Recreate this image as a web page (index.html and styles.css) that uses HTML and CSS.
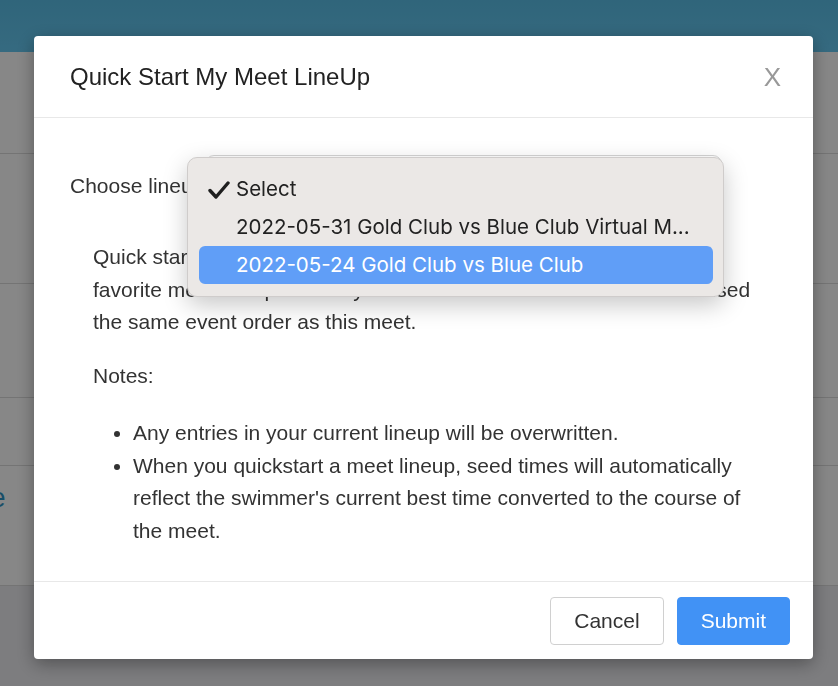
FILE: index.html
```html
<!DOCTYPE html>
<html lang="en">

<head>
    <meta charset="UTF-8" />
    <meta name="viewport" content="width=device-width, initial-scale=1" />
    <title>Quick Start My Meet LineUp</title>
    <link rel="stylesheet" href="styles.css">
</head>

<body>

    <div class="page">
        <div class="topbar"></div>
        <div class="rows">
            <div class="row row-1"></div>
            <div class="row row-2"></div>
            <div class="row row-3"></div>
            <div class="row row-4"></div>
            <div class="row row-5"><a class="row-link">Change</a></div>
        </div>
        <div class="page-foot"></div>
    </div>

    <div class="backdrop">
        <div class="modal">
            <div class="modal-header">
                <h4 class="modal-title">Quick Start My Meet LineUp</h4>
                <button class="close">X</button>
            </div>

            <div class="modal-body">
                <div class="form-row">
                    <label class="form-label">Choose lineup</label>
                    <div class="select-wrap">
                        <div class="select"></div>
                        <div class="popup">
                            <div class="popup-item">
                                <svg class="check" width="22" height="18" viewBox="0 0 22 18">
                                    <path d="M2 9.5 L8 16 L20 2" fill="none" stroke="#1f1f1f" stroke-width="3.4" stroke-linecap="round" stroke-linejoin="round" />
                                </svg>
                                Select
                            </div>
                            <div class="popup-item">2022-05-31 Gold Club vs Blue Club Virtual M...</div>
                            <div class="popup-item active">2022-05-24 Gold Club vs Blue Club</div>
                        </div>
                    </div>
                </div>

                <div class="info">
                    <p>Quick start your meet lineup by using your last meet lineup or your favorite meet lineup from any swim meet in the last 6 months that used the same event order as this meet.</p>
                    <p>Notes:</p>
                    <ul>
                        <li>Any entries in your current lineup will be overwritten.</li>
                        <li>When you quickstart a meet lineup, seed times will automatically reflect the swimmer's current best time converted to the course of the meet.</li>
                    </ul>
                </div>
            </div>

            <div class="modal-footer">
                <button class="btn btn-default">Cancel</button>
                <button class="btn btn-primary">Submit</button>
            </div>
        </div>
    </div>

</body>

</html>
```

FILE: styles.css
```css
html,
body {
    margin: 0;
    padding: 0;
    height: 100%;
    overflow: hidden;
    font-family: "Liberation Sans", Arial, sans-serif;
    color: #333;
}

/* page behind the dialog */
.page {
    height: 100%;
    display: flex;
    flex-direction: column;
    background: #fff;
}

.topbar {
    height: 52px;
    background: linear-gradient(#5bbfe8, #66c9f2);
}

.row {
    box-sizing: border-box;
    border-bottom: 1px solid #dcdcdc;
    background: #fff;
}

.row-1 { height: 102px; }
.row-2 { height: 130px; }
.row-3 { height: 114px; }
.row-4 { height: 68px; }
.row-5 { height: 120px; padding-top: 17px; overflow: hidden; }

.row-link {
    display: block;
    margin-left: -89px;
    font-size: 27px;
    white-space: nowrap;
    color: #2f93c4;
}

.page-foot {
    flex: 1;
    background: #ececf0;
}

/* dialog */
.backdrop {
    position: fixed;
    top: 0;
    left: 0;
    right: 0;
    bottom: 0;
    background: rgba(0, 0, 0, 0.47);
}

.modal {
    width: 779px;
    margin: 36px 0 0 34px;
    background: #fff;
    border-radius: 4px;
    box-shadow: 0 5px 18px rgba(0, 0, 0, 0.35);
}

.modal-header {
    height: 82px;
    box-sizing: border-box;
    padding: 0 32px 0 36px;
    display: flex;
    align-items: center;
    justify-content: space-between;
    border-bottom: 1px solid #e8e8e8;
}

.modal-title {
    margin: 0;
    font-size: 24px;
    font-weight: normal;
    color: #222;
}

.close {
    border: none;
    background: none;
    padding: 0;
    font-family: "Liberation Sans", Arial, sans-serif;
    font-size: 26px;
    line-height: 1;
    color: #999;
    cursor: pointer;
}

.modal-body {
    padding: 37px 36px 13px;
    font-size: 21px;
    line-height: 32.5px;
}

.form-row {
    display: flex;
    align-items: center;
}

.form-label {
    flex: 0 0 135px;
    white-space: nowrap;
}

.select-wrap {
    position: relative;
    width: 517px;
}

.select {
    height: 62px;
    box-sizing: border-box;
    border: 1px solid #d4d4d4;
    border-radius: 9px;
    background: #fff;
}

/* open native menu */
.popup {
    position: absolute;
    top: 2px;
    left: -18px;
    width: 537px;
    box-sizing: border-box;
    padding: 12px 10px 12px 11px;
    background: #ebe8e6;
    border: 1px solid #cfcccb;
    border-radius: 10px;
    box-shadow: 0 8px 24px rgba(0, 0, 0, 0.22);
    font-family: Inter, "Noto Sans", sans-serif;
    font-size: 20.5px;
    line-height: 38px;
    color: #222;
    z-index: 10;
}

.popup-item {
    position: relative;
    height: 38px;
    padding-left: 37px;
    border-radius: 6px;
    white-space: nowrap;
}

.popup-item.active {
    background: #609ef7;
    color: #fff;
}

.check {
    position: absolute;
    left: 9px;
    top: 11px;
}

.info {
    padding: 0 23px;
    margin-top: 24px;
}

.info p {
    margin: 0 0 21px;
}

.info ul {
    margin: 25px 0 21px;
    padding-left: 40px;
}

.modal-footer {
    display: flex;
    justify-content: flex-end;
    gap: 13px;
    padding: 15px 23px 14px;
    border-top: 1px solid #e8e8e8;
}

.btn {
    height: 48px;
    padding: 0 23px;
    font-family: "Liberation Sans", Arial, sans-serif;
    font-size: 21px;
    border-radius: 4px;
    cursor: pointer;
}

.btn-default {
    background: #fff;
    color: #333;
    border: 1px solid #d0d0d0;
}

.btn-primary {
    background: #4192f5;
    color: #fff;
    border: 1px solid #4192f5;
}
```
